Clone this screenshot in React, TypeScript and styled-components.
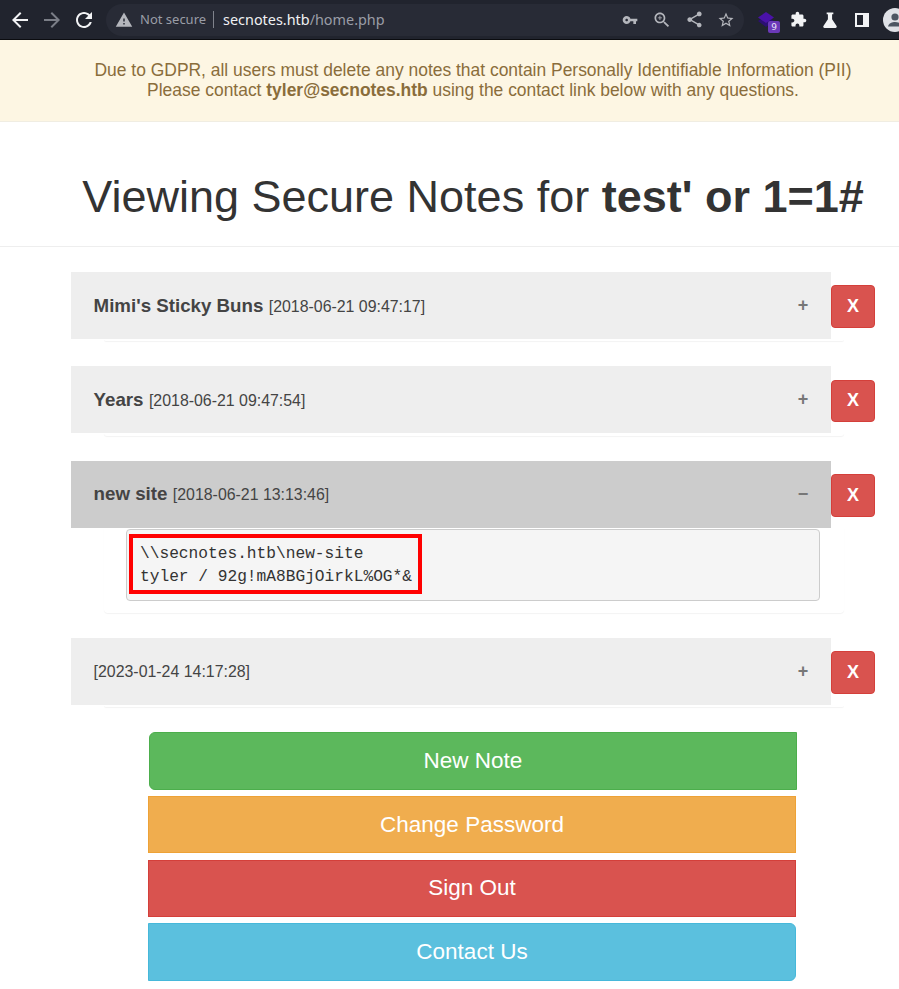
import React from "react";
import styled, { createGlobalStyle } from "styled-components";

const Global = createGlobalStyle`
  html, body { margin: 0; padding: 0; background: #fff; overflow: hidden; }
  body { font-family: "Liberation Sans", Arial, sans-serif; color: #333; }
  * { box-sizing: border-box; }
`;

const Page = styled.div`
  width: 899px;
  height: 989px;
  overflow: hidden;
`;

const Toolbar = styled.div`
  height: 40px;
  background: #21242e;
  border-bottom: 1px solid #0b0c10;
  display: flex;
  align-items: center;
  overflow: hidden;
`;

const NavIcons = styled.div`
  display: flex;
  align-items: center;
  gap: 8px;
  padding-left: 8px;
  width: 106px;
  flex: none;
`;

const Pill = styled.div`
  width: 638px;
  height: 32px;
  flex: none;
  border-radius: 16px;
  background: #282b36;
  display: flex;
  align-items: center;
  padding-left: 9px;
  font-family: "Noto Sans", sans-serif;
  font-size: 14.4px;
  color: #9a9da6;
`;

const SecureLabel = styled.span`
  margin-left: 7px;
  padding-right: 7px;
  font-size: 13px;
  line-height: 17px;
  border-right: 1px solid #80838c;
  margin-right: 9px;
`;

const Host = styled.span`
  color: #f0f1f3;
`;

const PillActions = styled.div`
  margin-left: auto;
  display: flex;
  align-items: center;
  gap: 12px;
  padding-right: 8px;
`;

const PillSlot = styled.span`
  width: 20px;
  height: 20px;
  display: flex;
  align-items: center;
  justify-content: center;
`;

const ExtIcons = styled.div`
  display: flex;
  align-items: center;
  padding-left: 11px;
  flex: none;
`;

const ExtWrap = styled.div`
  position: relative;
  width: 24px;
  height: 24px;
  margin-right: 3px;
`;

const ToolSlot = styled.span`
  width: 32px;
  height: 24px;
  display: flex;
  align-items: center;
  justify-content: center;
`;

const Badge = styled.span`
  position: absolute;
  left: 13px;
  top: 13px;
  width: 12px;
  height: 12px;
  border-radius: 2px;
  background: #6b39b8;
  color: #e8e0f8;
  font-family: "DejaVu Sans", sans-serif;
  font-size: 9px;
  line-height: 12px;
  text-align: center;
`;

const Avatar = styled.svg`
  flex: none;
  margin-left: 5px;
`;

const Banner = styled.div`
  height: 82px;
  background: #fdf6e3;
  border-bottom: 1px solid #f0ede2;
  padding: 20px 0 0 47px;
  text-align: center;
  font-size: 17.45px;
  line-height: 20px;
  color: #8a6d3b;
`;

const Heading = styled.h1`
  margin: 0;
  height: 125px;
  padding: 47px 0 0 47px;
  border-bottom: 1px solid #eee;
  text-align: center;
  font-size: 45px;
  line-height: 56px;
  font-weight: 400;
  color: #333;
  white-space: nowrap;
`;

const Notes = styled.div`
  padding: 25px 0 0 71px;
  display: flex;
  flex-direction: column;
  gap: 25px;
`;

const Note = styled.div`
  width: 804px;
`;

const HeadRow = styled.div`
  display: flex;
  align-items: flex-start;
`;

const NoteHeader = styled.div<{ $open?: boolean }>`
  width: 760px;
  height: 67px;
  flex: none;
  display: flex;
  align-items: center;
  justify-content: space-between;
  padding: 0 22px 0 22.6px;
  background: ${(p) => (p.$open ? "#ccc" : "#eee")};
  color: #444;
  font-size: 15.9px;
  line-height: 21px;
`;

const NoteTitle = styled.div<{ $named: boolean }>`
  white-space: nowrap;
  height: 21px;
  margin-top: ${(p) => (p.$named ? "-1px" : "0")};
`;

const TitleName = styled.b`
  font-size: 18.72px;
  margin-right: 1px;
`;

const Toggle = styled.span`
  font-size: 18px;
  font-weight: 700;
  color: #777;
  width: 12px;
  height: 21px;
  text-align: center;
`;

const DeleteButton = styled.button`
  width: 44px;
  height: 42.6px;
  margin-top: 13.3px;
  flex: none;
  padding: 0;
  background: #d9534f;
  border: 1px solid #d43f3a;
  border-radius: 4px;
  color: #fff;
  font-family: "Liberation Sans", sans-serif;
  font-size: 18px;
  font-weight: 700;
`;

const Panel = styled.div<{ $open?: boolean }>`
  width: 740px;
  height: ${(p) => (p.$open ? "85px" : "2.4px")};
  margin-left: 33px;
  padding: 1px 24px 0 22px;
  background: #fff;
  border-radius: 0 0 4px 4px;
  box-shadow: 0 1px 1px rgba(0, 0, 0, 0.05);
`;

const Pre = styled.pre`
  margin: 0;
  height: 72px;
  padding: 4px 2px;
  background: #f5f5f5;
  border: 1px solid #ccc;
  border-radius: 4px;
  font-family: "Liberation Mono", monospace;
  font-size: 16.2px;
  line-height: 23px;
  color: #333;
`;

const Highlight = styled.div`
  width: 293px;
  height: 60px;
  border: 4px solid #f00;
  padding: 5px 7px 0;
`;

const Actions = styled.div`
  padding: 24.8px 0 0 148px;
  width: 798px;
  display: flex;
  flex-direction: column;
`;

const ActionButton = styled.button<{
  $bg: string;
  $line: string;
  $h: number;
  $gap: number;
  $radius: string;
  $shift?: number;
  $nudge?: number;
}>`
  width: 648px;
  height: ${(p) => p.$h}px;
  margin-top: ${(p) => p.$gap}px;
  margin-left: ${(p) => p.$shift ?? 0}px;
  padding: ${(p) => p.$nudge ?? 0}px 0 0;
  flex: none;
  background: ${(p) => p.$bg};
  border: 1px solid ${(p) => p.$line};
  border-radius: ${(p) => p.$radius};
  color: #fff;
  font-family: "Liberation Sans", sans-serif;
  font-size: 22.5px;
`;

const Svg = styled.svg<{ $flip?: boolean }>`
  flex: none;
  transform: ${(p) => (p.$flip ? "scaleX(-1)" : "none")};
`;

const Glyph = ({ d, color, size = 24, flip }: { d: string; color: string; size?: number; flip?: boolean }) => (
  <Svg width={size} height={size} viewBox="0 0 24 24" fill={color} $flip={flip}>
    <path d={d} />
  </Svg>
);

const ARROW = "M20 11H7.83l5.59-5.59L12 4l-8 8 8 8 1.41-1.41L7.83 13H20v-2z";
const REFRESH =
  "M17.65 6.35C16.2 4.9 14.21 4 12 4c-4.42 0-7.99 3.58-7.99 8s3.57 8 7.99 8c3.73 0 6.84-2.55 7.73-6h-2.08c-.82 2.33-3.04 4-5.65 4-3.31 0-6-2.69-6-6s2.69-6 6-6c1.66 0 3.14.69 4.22 1.78L13 11h7V4l-2.35 2.35z";
const WARN = "M1 21h22L12 2 1 21zm12-3h-2v-2h2v2zm0-4h-2v-4h2v4z";
const KEY =
  "M12.65 10C11.83 7.67 9.61 6 7 6c-3.31 0-6 2.69-6 6s2.69 6 6 6c2.61 0 4.83-1.67 5.65-4H17v4h4v-4h2v-4H12.65zM7 14c-1.1 0-2-.9-2-2s.9-2 2-2 2 .9 2 2-.9 2-2 2z";
const ZOOM =
  "M15.5 14h-.79l-.28-.27C15.41 12.59 16 11.11 16 9.5 16 5.91 13.09 3 9.5 3S3 5.91 3 9.5 5.91 16 9.5 16c1.61 0 3.09-.59 4.23-1.57l.27.28v.79l5 4.99L20.49 19l-4.99-5zm-6 0C7.01 14 5 11.99 5 9.5S7.01 5 9.5 5 14 7.01 14 9.5 11.99 14 9.5 14zM12 10h-2v2H9v-2H7V9h2V7h1v2h2v1z";
const SHARE =
  "M18 16.08c-.76 0-1.44.3-1.96.77L8.91 12.7c.05-.23.09-.46.09-.7s-.04-.47-.09-.7l7.05-4.11c.54.5 1.25.81 2.04.81 1.66 0 3-1.34 3-3s-1.34-3-3-3-3 1.34-3 3c0 .24.04.47.09.7L8.04 9.81C7.5 9.31 6.79 9 6 9c-1.66 0-3 1.34-3 3s1.34 3 3 3c.79 0 1.5-.31 2.04-.81l7.12 4.16c-.05.21-.08.43-.08.65 0 1.61 1.31 2.92 2.92 2.92 1.61 0 2.92-1.31 2.92-2.92s-1.31-2.92-2.92-2.92z";
const STAR =
  "M22 9.24l-7.19-.62L12 2 9.19 8.63 2 9.24l5.46 4.73L5.82 21 12 17.27 18.18 21l-1.63-7.03L22 9.24zM12 15.4l-3.76 2.27 1-4.28-3.32-2.88 4.38-.38L12 6.1l1.71 4.04 4.38.38-3.32 2.88 1 4.28L12 15.4z";
const PUZZLE =
  "M20.5 11H19V7c0-1.1-.9-2-2-2h-4V3.5C13 2.12 11.88 1 10.5 1S8 2.12 8 3.5V5H4c-1.1 0-1.99.9-1.99 2v3.8H3.5c1.49 0 2.7 1.21 2.7 2.7s-1.21 2.7-2.7 2.7H2V20c0 1.1.9 2 2 2h3.8v-1.5c0-1.49 1.21-2.7 2.7-2.7 1.49 0 2.7 1.21 2.7 2.7V22H17c1.1 0 2-.9 2-2v-4h1.5c1.38 0 2.5-1.12 2.5-2.5S21.88 11 20.5 11z";
const FLASK = "M8 3h8v2h-1.5v6l5.4 8.2c.6 1-.1 2.3-1.3 2.3H5.4c-1.2 0-1.9-1.3-1.3-2.3L9.5 11V5H8V3z";

const notes = [
  { title: "Mimi's Sticky Buns", date: "[2018-06-21 09:47:17]" },
  { title: "Years", date: "[2018-06-21 09:47:54]" },
  { title: "new site", date: "[2018-06-21 13:13:46]", open: true },
  { title: "", date: "[2023-01-24 14:17:28]" },
];

const buttons = [
  { label: "New Note", bg: "#5cb85c", line: "#4cae4c", h: 58, gap: 0, radius: "6px 0 0 6px", shift: 1 },
  { label: "Change Password", bg: "#f0ad4e", line: "#eea236", h: 57, gap: 6, radius: "0", nudge: 1 },
  { label: "Sign Out", bg: "#d9534f", line: "#d43f3a", h: 57, gap: 7, radius: "0" },
  { label: "Contact Us", bg: "#5bc0de", line: "#46b8da", h: 58, gap: 6, radius: "0 6px 6px 0" },
];

export default function App() {
  return (
    <Page>
      <Global />
      <Toolbar>
        <NavIcons>
          <Glyph d={ARROW} color="#f2f3f5" />
          <Glyph d={ARROW} color="#7b7e87" flip />
          <Glyph d={REFRESH} color="#f2f3f5" />
        </NavIcons>
        <Pill>
          <Glyph d={WARN} color="#b4b6bc" size={18} />
          <SecureLabel>Not secure</SecureLabel>
          <span>
            <Host>secnotes.htb</Host>/home.php
          </span>
          <PillActions>
            <PillSlot>
              <Glyph d={KEY} color="#b4b6bc" size={16} />
            </PillSlot>
            <PillSlot>
              <Glyph d={ZOOM} color="#b4b6bc" size={20} />
            </PillSlot>
            <PillSlot>
              <Glyph d={SHARE} color="#b4b6bc" size={19} />
            </PillSlot>
            <PillSlot>
              <Glyph d={STAR} color="#b4b6bc" size={18} />
            </PillSlot>
          </PillActions>
        </Pill>
        <ExtIcons>
          <ExtWrap>
            <svg width="24" height="24" viewBox="0 0 24 24">
              <path d="M11 8l8 5-8 6-8-6z" fill="#2c0f73" />
              <path d="M11 4l8 5.5-8 5.5-8-5.5z" fill="#4a12a8" />
            </svg>
            <Badge>9</Badge>
          </ExtWrap>
          <ToolSlot>
            <Glyph d={PUZZLE} color="#f2f3f5" size={17} />
          </ToolSlot>
          <ToolSlot>
            <Glyph d={FLASK} color="#f2f3f5" size={20} />
          </ToolSlot>
          <ToolSlot>
            <svg width="16" height="16" viewBox="0 0 16 16">
              <path d="M2 2h12v12H2z" fill="none" stroke="#f2f3f5" strokeWidth="2" />
              <path d="M9 2h5v12H9z" fill="#f2f3f5" />
            </svg>
          </ToolSlot>
        </ExtIcons>
        <Avatar width="24" height="24" viewBox="0 0 24 24">
          <circle cx="12" cy="12" r="12" fill="#dfe1e6" />
          <circle cx="12" cy="9" r="3.6" fill="#4d5662" />
          <path d="M5 18.5c.8-3.6 4.4-4.5 7-4.5s6.2.9 7 4.5z" fill="#4d5662" />
        </Avatar>
      </Toolbar>

      <Banner>
        Due to GDPR, all users must delete any notes that contain Personally Identifiable Information (PII)
        <br />
        Please contact <b>tyler@secnotes.htb</b> using the contact link below with any questions.
      </Banner>

      <Heading>
        Viewing Secure Notes for <b>test' or 1=1#</b>
      </Heading>

      <Notes>
        {notes.map((n) => (
          <Note key={n.date}>
            <HeadRow>
              <NoteHeader $open={n.open}>
                <NoteTitle $named={!!n.title}>
                  {n.title && <TitleName>{n.title}</TitleName>} {n.date}
                </NoteTitle>
                <Toggle>{n.open ? "−" : "+"}</Toggle>
              </NoteHeader>
              <DeleteButton>X</DeleteButton>
            </HeadRow>
            <Panel $open={n.open}>
              {n.open && (
                <Pre>
                  <Highlight>
                    {"\\\\secnotes.htb\\new-site\ntyler / 92g!mA8BGjOirkL%OG*&"}
                  </Highlight>
                </Pre>
              )}
            </Panel>
          </Note>
        ))}
      </Notes>

      <Actions>
        {buttons.map((b) => (
          <ActionButton
            key={b.label}
            $bg={b.bg}
            $line={b.line}
            $h={b.h}
            $gap={b.gap}
            $radius={b.radius}
            $shift={b.shift}
            $nudge={b.nudge}
          >
            {b.label}
          </ActionButton>
        ))}
      </Actions>
    </Page>
  );
}
